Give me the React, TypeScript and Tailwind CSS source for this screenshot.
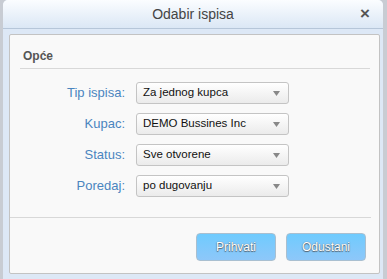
import React from 'react';

const ROWS = [
  { label: 'Tip ispisa:', value: 'Za jednog kupca' },
  { label: 'Kupac:', value: 'DEMO Bussines Inc' },
  { label: 'Status:', value: 'Sve otvorene' },
  { label: 'Poredaj:', value: 'po dugovanju' },
];

const Select = ({ value }: { value: string }) => (
  <div className="flex items-center justify-between w-[153px] h-[22px] pl-[6px] pr-[8px] rounded-[3px] border border-[#c4c4c4] bg-gradient-to-b from-white to-[#ebebeb] text-[11.5px] text-[#111]">
    <span>{value}</span>
    <svg width="7" height="5" viewBox="0 0 7 5">
      <path d="M0 0 H7 L3.5 5 Z" fill="#888" />
    </svg>
  </div>
);

const Button = ({ children }: { children: React.ReactNode }) => (
  <button className="w-[80px] h-[28px] rounded-[4px] border border-[#a9bfd0] bg-gradient-to-b from-[#6ecbfe] to-[#8dc7f9] text-[12px] text-white [text-shadow:0_0_1px_#4b5b6b,0_1px_1px_#55606b]">
    {children}
  </button>
);

export default function App() {
  return (
    <div className="w-[387px] h-[279px] bg-[#c8ccd3] flex font-['Liberation_Sans',Arial,sans-serif]">
      <div className="ml-[3px] w-[380px] flex flex-col bg-[#dde8f6] rounded-t-[5px] overflow-hidden">
        {/* Header */}
        <div className="relative h-[29px] shrink-0 flex items-center justify-center border-b border-[#b6c6d9] bg-gradient-to-b from-[#fbfdff] to-[#dbe7f5]">
          <span className="text-[14px] text-[#444]">Odabir ispisa</span>
          <span className="absolute right-[13px] top-[5px] text-[17px] font-bold text-[#555] leading-none">×</span>
        </div>

        {/* Panel */}
        <div className="ml-[6px] mt-[5px] w-[371px] h-[240px] flex flex-col rounded-[2px] border border-[#c3c3c3] bg-[#f9f9f9]">
          <div className="pl-[13px] pt-[13px] text-[12px] leading-[17px] font-bold text-[#555]">Opće</div>
          <div className="ml-[10px] mr-[9px] mt-[3px] h-px bg-[#d8d8d8]" />

          <div className="flex flex-col gap-[9px] mt-[13px]">
            {ROWS.map((r) => (
              <div key={r.label} className="flex items-center gap-[11px]">
                <span className="w-[115px] text-right text-[13px] text-[#4a85bf]">{r.label}</span>
                <Select value={r.value} />
              </div>
            ))}
          </div>

          <div className="mr-[8px] mt-[20px] h-px bg-[#d8d8d8]" />

          <div className="flex justify-end gap-[10px] mr-[13px] mt-[15px]">
            <Button>Prihvati</Button>
            <Button>Odustani</Button>
          </div>
        </div>
      </div>
    </div>
  );
}
